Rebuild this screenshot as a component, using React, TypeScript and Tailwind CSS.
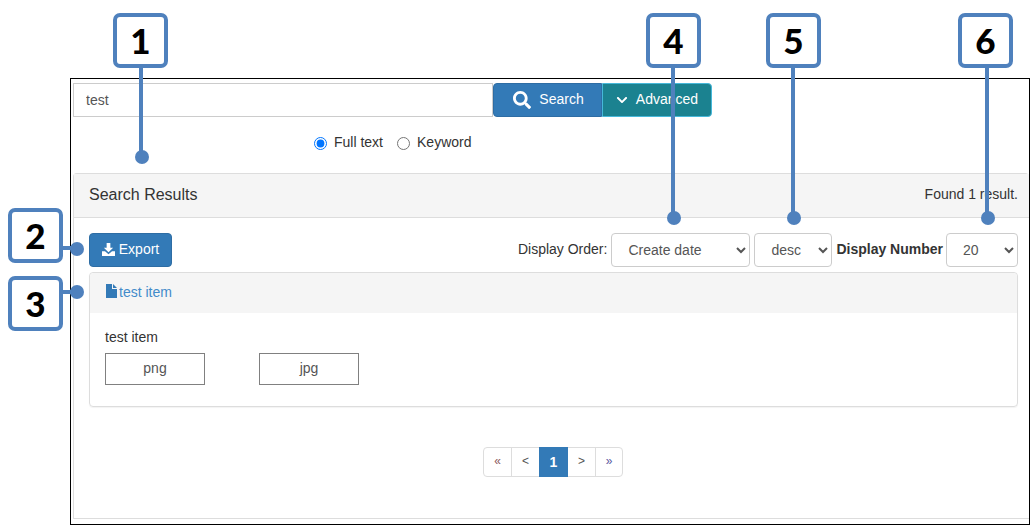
import { FaSearch, FaChevronDown } from 'react-icons/fa'

const pages = [
  { label: '«', width: 'w-[27px]', color: 'text-[#8a5a5a]' },
  { label: '<', width: 'w-[28px]', color: 'text-[#555]' },
  { label: '1', width: 'w-[29px]', color: 'text-white', active: true },
  { label: '>', width: 'w-[27px]', color: 'text-[#555]' },
  { label: '»', width: 'w-[27px]', color: 'text-[#5a5aa0]' },
]

// callouts lie over the page: number box + line + dot
const vertical = [
  { n: '1', box: 'left-[113px]', line: 'left-[139px] h-[92px]', dot: 'left-[135px] top-[150px]' },
  { n: '4', box: 'left-[646px]', line: 'left-[671px] h-[153px]', dot: 'left-[667px] top-[211px]' },
  { n: '5', box: 'left-[766px]', line: 'left-[791px] h-[153px]', dot: 'left-[787px] top-[211px]' },
  { n: '6', box: 'left-[958px]', line: 'left-[985px] h-[153px]', dot: 'left-[981px] top-[211px]' },
]

const horizontal = [
  { n: '2', box: 'top-[208px]', line: 'top-[246px]', dot: 'top-[242px]' },
  { n: '3', box: 'top-[276px]', line: 'top-[290px]', dot: 'top-[285px]' },
]

const boxClass =
  "absolute w-[55px] h-[55px] rounded-[7px] border-[4px] border-[#4f81bd] bg-white flex items-center justify-center text-[35px] font-black text-black leading-none font-['Lato',sans-serif]"

function Select({ value, options, className }: { value: string; options: string[]; className: string }) {
  return (
    <select
      defaultValue={value}
      className={`h-[34px] rounded border border-[#ccc] bg-white pl-3 text-sm text-[#555] ${className}`}
    >
      {options.map((o) => (
        <option key={o}>{o}</option>
      ))}
    </select>
  )
}

export default function App() {
  return (
    <div className="relative w-[1030px] h-[525px] overflow-hidden bg-white font-['Liberation_Sans',Arial,sans-serif] text-sm text-[#333]">
      <div className="ml-[70px] mt-[78px] w-[960px] h-[447px] border border-black pl-[2px] pt-[4px] pb-[5px] flex flex-col">
        {/* Search bar */}
        <div className="flex h-[34px]">
          <input
            defaultValue="test"
            className="w-[420px] h-full border border-[#ccc] px-3 text-sm text-[#555] outline-none"
          />
          <button className="w-[109px] h-full flex items-center justify-center gap-[8px] pl-[2px] bg-[#337ab7] border border-[#2e6da4] rounded-l text-white text-sm">
            <FaSearch size={18} />
            <span className="-translate-y-px">Search</span>
          </button>
          <button className="w-[110px] h-full flex items-center justify-center gap-[8px] bg-[#1b8290] border border-[#46b8da] rounded-r text-white text-sm">
            <FaChevronDown size={12} />
            <span className="-translate-y-px">Advanced</span>
          </button>
        </div>

        {/* Search type */}
        <div className="mt-[16px] ml-[241px] flex items-center h-[20px]">
          <label className="flex items-center gap-[7px]">
            <input type="radio" name="search-type" defaultChecked className="m-0 w-[13px] h-[13px]" />
            <span className="-translate-y-px">Full text</span>
          </label>
          <label className="ml-[14px] flex items-center gap-[7px]">
            <input type="radio" name="search-type" className="m-0 w-[13px] h-[13px]" />
            <span className="-translate-y-px">Keyword</span>
          </label>
        </div>

        {/* Results panel */}
        <div className="mt-[20px] flex-1 flex flex-col rounded-t border-t border-b border-l border-[#ddd]">
          <div className="h-[44px] shrink-0 flex items-center justify-between bg-[#f5f5f5] border-b border-[#ddd] pl-[15px] pr-[11px]">
            <span className="text-base -translate-y-px">Search Results</span>
            <span className="-translate-y-[2px]">Found 1 result.</span>
          </div>

          <div className="flex-1 pl-[15px] pr-[11px] pt-[15px] flex flex-col">
            <div className="flex items-center justify-between h-[34px]">
              <button className="w-[83px] h-[34px] flex items-center justify-center gap-[4px] bg-[#337ab7] border border-[#2e6da4] rounded text-white text-sm">
                <svg width="13" height="13" viewBox="0 0 14 14" fill="currentColor" className="-translate-y-px">
                  <path d="M5 0h4v5h3L7 10 2 5h3z" />
                  <path d="M0 9h3.2L7 12l3.8-3H14v5H0z" />
                </svg>
                <span className="-translate-y-px">Export</span>
              </button>
              <div className="flex items-center">
                <span className="mr-[4px] -translate-y-px">Display Order:</span>
                <Select value="Create date" options={['Create date', 'Title']} className="w-[139px]" />
                <Select value="desc" options={['desc', 'asc']} className="w-[78px] ml-[4px]" />
                <span className="ml-[4px] mr-[3px] font-bold -translate-y-px">Display Number</span>
                <Select value="20" options={['20', '50', '100']} className="w-[72px]" />
              </div>
            </div>

            {/* Result item */}
            <div className="mt-[5px] h-[135px] rounded border border-[#ddd] shadow-[0_1px_1px_rgba(0,0,0,0.05)]">
              <div className="h-[40px] rounded-t bg-[#f5f5f5] pl-[16px] flex items-center gap-[2px] text-[#337ab7]">
                <svg width="11" height="14" viewBox="0 0 11 14" fill="currentColor" className="-translate-y-[2px]">
                  <path d="M0 0h6v5h5v9H0z" />
                  <path d="M7 0l4 4H7z" />
                </svg>
                <span className="text-[#428bca] -translate-y-px">test item</span>
              </div>
              <div className="pl-[15px] pt-[15px]">
                <div className="h-[20px] leading-5 -translate-y-px">test item</div>
                <div className="mt-[5px] flex gap-[54px]">
                  <div className="w-[100px] h-[32px] border border-[#808080] flex items-center justify-center text-[#555]">
                    <span className="-translate-y-px">png</span>
                  </div>
                  <div className="w-[100px] h-[32px] border border-[#808080] flex items-center justify-center text-[#555]">
                    <span className="-translate-y-px">jpg</span>
                  </div>
                </div>
              </div>
            </div>

            {/* Pagination */}
            <div className="mt-[40px] flex justify-center pr-[1px]">
              <div className="flex h-[30px] rounded border border-[#ddd]">
                {pages.map((p, i) => (
                  <div
                    key={p.label}
                    className={`${p.width} ${p.color} flex items-center justify-center ${p.active ? 'bg-[#337ab7] font-bold text-sm -my-px' : 'text-xs'} ${i > 0 && !p.active && !pages[i - 1].active ? 'border-l border-[#ddd]' : ''}`}
                  >
                    <span className={p.active ? '' : '-translate-y-px'}>{p.label}</span>
                  </div>
                ))}
              </div>
            </div>
          </div>
        </div>
      </div>

      {/* Callouts */}
      {vertical.map((c) => (
        <div key={c.n}>
          <div className={`absolute top-[66px] w-[4px] bg-[#4f81bd] ${c.line}`} />
          <div className={`absolute w-[14px] h-[14px] rounded-full bg-[#4f81bd] ${c.dot}`} />
          <div className={`${boxClass} top-[13px] ${c.box}`}>{c.n}</div>
        </div>
      ))}
      {horizontal.map((c) => (
        <div key={c.n}>
          <div className={`absolute left-[61px] w-[16px] h-[4px] bg-[#4f81bd] ${c.line}`} />
          <div className={`absolute left-[70px] w-[14px] h-[14px] rounded-full bg-[#4f81bd] ${c.dot}`} />
          <div className={`${boxClass} left-[8px] ${c.box}`}>{c.n}</div>
        </div>
      ))}
    </div>
  )
}
